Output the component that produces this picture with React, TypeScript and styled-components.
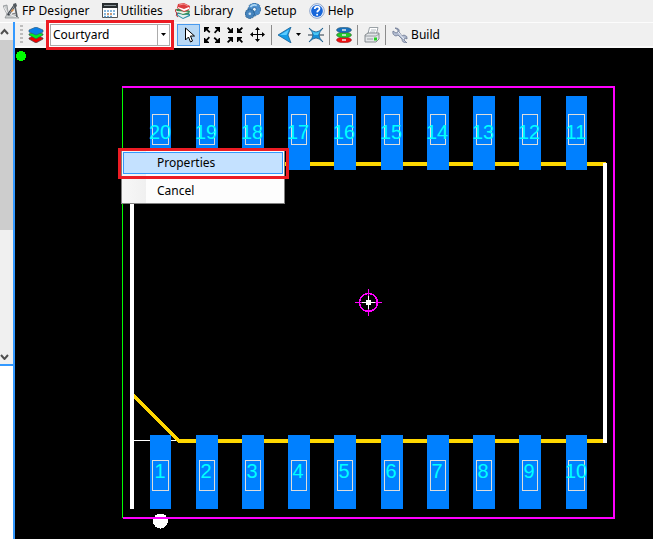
import React from "react";
import styled, { createGlobalStyle } from "styled-components";

const Global = createGlobalStyle`
  *, *::before, *::after { box-sizing: border-box; }
  html, body, #root { height: 100%; }
  body {
    margin: 0;
    overflow: hidden;
    background: #f0f0f0;
    color: #000;
    font: 12px/16px "Noto Sans", "Open Sans", sans-serif;
  }
  button, select { font: inherit; color: inherit; }
  svg { flex: none; }
`;

const Window = styled.div`
  display: flex;
  flex-direction: column;
  height: 100vh;
`;

const MenuBar = styled.nav`
  display: flex;
  flex: none;
  height: 22px;
  padding-left: 3px;
  gap: 12px;
`;

const MenuItem = styled.button`
  display: flex;
  align-items: center;
  gap: 3px;
  padding: 0;
  border: 0;
  background: none;
  white-space: nowrap;
`;

const Body = styled.div`
  display: flex;
  flex: 1;
  min-height: 0;
`;

const SidePane = styled.aside`
  display: flex;
  flex-direction: column;
  flex: none;
  width: 15px;
  border-right: 2px solid #3399ff;
  background: #fff;
`;

const ScrollBar = styled.div`
  display: flex;
  flex-direction: column;
  height: 343px;
  margin-top: 1px;
  border-bottom: 2px solid #3399ff;
  background: #f0f0f0;
`;

const ScrollButton = styled.button`
  display: flex;
  align-items: center;
  flex: none;
  height: 17px;
  padding: 0;
  border: 0;
  background: #f0f0f0;
`;

const ScrollThumb = styled.div`
  height: 190px;
  background: #cdcdcd;
`;

const ScrollSpace = styled.div`
  flex: 1;
`;

const Main = styled.main`
  display: flex;
  flex-direction: column;
  flex: 1;
  min-width: 0;
`;

const ToolBar = styled.div`
  display: flex;
  align-items: center;
  flex: none;
  height: 26px;
  padding: 0 5px;
  border-top: 1px solid #fcfcfc;
  border-bottom: 2px solid #fafafa;
  background: #f0f0f0;
`;

const Grip = styled.div`
  width: 3px;
  height: 19px;
  margin-right: 5px;
  background: repeating-linear-gradient(#bdbdbd 0 2px, transparent 2px 4px);
`;

const Highlight = styled.div`
  position: relative;
  z-index: 1;
  flex: none;
  margin: -4px 3px -4px 2px;
  border: 3px solid #ed1c24;
  background: #fff;
`;

const LayerField = styled.label`
  display: flex;
  align-items: center;
  position: relative;
  width: 122px;
  height: 24px;
  padding: 1px;
`;

const LayerSelect = styled.select`
  appearance: none;
  width: 100%;
  height: 100%;
  padding: 0 16px 0 2px;
  border: 1px solid #acacac;
  border-radius: 0;
  background: #fff;
`;

const SelectArrow = styled.span`
  display: grid;
  place-items: center;
  position: absolute;
  top: 2px;
  right: 2px;
  bottom: 2px;
  width: 12px;
  border-left: 1px solid #acacac;
  background: #fff;
  pointer-events: none;
`;

const ToolButton = styled.button<{ $active?: boolean; $width?: number }>`
  display: flex;
  align-items: center;
  justify-content: center;
  flex: none;
  gap: 3px;
  width: ${(p) => (p.$width ? `${p.$width}px` : "23px")};
  height: 22px;
  padding: 0;
  border: 1px solid ${(p) => (p.$active ? "#4a9bef" : "transparent")};
  background: ${(p) => (p.$active ? "#b8d8f5" : "none")};
`;

const Separator = styled.div`
  flex: none;
  width: 1px;
  height: 20px;
  margin: 0 2px;
  background: #8c8c8c;
`;

const Stage = styled.section`
  position: relative;
  flex: 1;
  overflow: hidden;
  background: #000;
`;

const Drawing = styled.svg`
  display: block;
  font: 20px "Liberation Sans", Arial, sans-serif;
`;

const ContextMenu = styled.div`
  position: absolute;
  left: 106px;
  top: 102px;
  width: 164px;
  padding: 1px;
  border: 1px solid #808080;
  background: linear-gradient(90deg, #f7f7f7, #f0f0f0 24px, #fdfdfd 24px);
`;

const ContextItem = styled.button<{ $active?: boolean }>`
  display: block;
  width: 100%;
  height: 22px;
  padding: 0 0 0 33px;
  border: 1px solid ${(p) => (p.$active ? "#3399ff" : "transparent")};
  background: ${(p) => (p.$active ? "#c4e1ff" : "none")};
  text-align: left;

  & + & { margin-top: 6px; }
`;

const ContextHighlight = styled.div`
  position: absolute;
  left: 103px;
  top: 100px;
  width: 171px;
  height: 31px;
  border: 3px solid #ed1c24;
  pointer-events: none;
`;

const Icon = ({ children }: { children: React.ReactNode }) => (
  <svg width="16" height="16" viewBox="0 0 16 16" aria-hidden="true">{children}</svg>
);

const DesignerIcon = () => (
  <Icon>
    <path d="M0 3l4-1 1 7-1 3h8l4 3H2l2-4z" fill="#c9cccd" stroke="#83878a" strokeWidth=".7" />
    <path d="M1 4l4 7 9 3" fill="none" stroke="#f4f4f4" strokeWidth=".9" />
    <path d="M12 2L5 12" stroke="#3e454c" strokeWidth="2.4" />
    <path d="M12 2L6 11" stroke="#c7cdd2" strokeWidth=".7" />
    <path d="M12 3l2 11" stroke="#565c61" strokeWidth="1.6" />
    <path d="M10 1l3-1 1 3-2 2z" fill="#50575d" />
    <path d="M8 8l2-2 1 1-2 2z" fill="#e08a3c" />
    <path d="M9 11l4-1" stroke="#777" />
  </Icon>
);

const UtilitiesIcon = () => (
  <Icon>
    <path d="M.5 1.5h15v13H.5z" fill="#fff" stroke="#555" />
    <path d="M0 0h16v5H0z" fill="#292e31" />
    <path d="M2 2h12v1H2z" fill="#8b9498" />
    <path d="M2 8h12M2 11h12M2 13.5h9" stroke="#5f9fd0" strokeWidth="1.6" strokeDasharray="2 1" />
    <path d="M5 11h5" stroke="#e09158" strokeWidth="1.6" strokeDasharray="2 1" />
  </Icon>
);

const LibraryIcon = () => (
  <Icon>
    <path d="M1 10l8-2 6 3v2l-7 3-7-4z" fill="#2c91a8" />
    <path d="M3 11l11 1-6 3-5-3z" fill="#e4efed" />
    <path d="M1 6l7-1 7 3-1 3-6 1-6-3z" fill="#338c55" />
    <path d="M2 8l12 1-6 2-6-2z" fill="#f3f3e9" />
    <path d="M3 1l6-1 6 3-1 4-5 2-7-4z" fill="#db3b3e" />
    <path d="M3 4l6 2 5-2v2L9 8 3 5z" fill="#fff" />
    <path d="M4 2l5-1 4 2" stroke="#f48c89" fill="none" />
    <path d="M1 6q-2 3 1 4M2 10q-2 3 1 4" stroke="#c83338" fill="none" />
  </Icon>
);

const gearPath = "M6 0h4l.5 2 2-.8 2.3 2.3-1 2 2.2.5v4l-2.2.5 1 2-2.3 2.3-2-1L10 16H6l-.5-2.2-2 1-2.3-2.3 1-2L0 10V6l2.2-.5-1-2 2.3-2.3 2 .8z";
const SetupIcon = () => (
  <Icon>
    <g transform="translate(3 0) scale(.8)">
      <path d={gearPath} fill="#4d8fce" stroke="#28679e" strokeWidth=".8" />
      <path d="M3 5q3-4 8-2" stroke="#aad6f4" strokeWidth="2" fill="none" />
      <circle cx="8" cy="8" r="2.4" fill="#e9f4fb" stroke="#28679e" />
    </g>
    <g transform="translate(0 6) scale(.6)">
      <path d={gearPath} fill="#4584be" stroke="#245987" />
      <circle cx="8" cy="8" r="2.2" fill="#c8e0f2" />
    </g>
  </Icon>
);

const HelpIcon = () => (
  <Icon>
    <circle cx="8" cy="8" r="7.3" fill="#f2f6fd" stroke="#8ba4cc" />
    <circle cx="8" cy="8" r="5.9" fill="#1766da" />
    <path d="M5.7 6q.2-2.3 2.5-2.3t2.3 2q0 1-1.1 1.8T8.1 9.4" fill="none" stroke="#fff" strokeWidth="1.7" />
    <circle cx="8.1" cy="11.7" r="1" fill="#fff" />
  </Icon>
);

const LayersIcon = () => (
  <Icon>
    <path d="M1 11l7-3 7 3v1l-7 4-7-4z" fill="#f00000" stroke="#424b4c" strokeWidth=".7" />
    <path d="M1 7l7-3 7 3v1l-7 4-7-4z" fill="#00ed22" stroke="#424b4c" strokeWidth=".7" />
    <path d="M1 3l7-3 7 3v2L8 8 1 5z" fill="#087fe9" stroke="#315f7e" strokeWidth=".7" />
  </Icon>
);

const PointerIcon = () => (
  <Icon>
    <path d="M4.5 1v12l3-3 2 5 2-1-2-5h4z" fill="#fff" stroke="#000" />
  </Icon>
);

const ExpandIcon = () => (
  <Icon>
    {[0, 90, 180, 270].map((a) => (
      <path key={a} d="M0 0h5v1L3.6 2 6.4 4.8 5.2 6 2.2 3.2 1 5H0z" transform={`rotate(${a} 8 8)`} />
    ))}
  </Icon>
);

const ContractIcon = () => (
  <Icon>
    {[0, 90, 180, 270].map((a) => (
      <path key={a} d="M6 6H1V5l1.6-1L0 1.2 1.2 0 4 2.8 5 1h1z" transform={`rotate(${a} 8 8)`} />
    ))}
  </Icon>
);

const MoveIcon = () => (
  <Icon>
    <path d="M7.5 1v13M1 7.5h13" stroke="#000" shapeRendering="crispEdges" />
    <path d="M7.5 0L10 3H5zM7.5 15l2.5-3H5zM0 7.5L3 5v5zM15 7.5L12 5v5z" />
  </Icon>
);

const BackIcon = () => (
  <Icon>
    <path d="M1 8L14 0l-3 8 3 8z" fill="#149ce8" stroke="#1b5f94" strokeWidth=".8" />
    <path d="M3 8l9-5.5L9.5 8z" fill="#5dccff" />
  </Icon>
);

const CrossIcon = () => (
  <Icon>
    <path d="M0 8h16" stroke="#4b5a66" strokeWidth="1.2" />
    <path d="M1 1q4 4 7 4t7-4q-4 4-4 7t4 7q-4-4-7-4t-7 4q4-4 4-7t-4-7z" fill="#168fd8" stroke="#15598a" strokeWidth=".8" />
    <path d="M4 4q4 3 8 0l-2 4H6z" fill="#4cc6f4" />
  </Icon>
);

const ViasIcon = () => (
  <Icon>
    <path d="M6 3h4v10H6z" fill="#626b65" />
    <ellipse cx="8" cy="13" rx="7.5" ry="2.8" fill="#f01010" stroke="#8c2222" strokeWidth=".6" />
    <ellipse cx="8" cy="8" rx="7.5" ry="2.8" fill="#20cc28" stroke="#3e593b" strokeWidth=".6" />
    <ellipse cx="8" cy="3" rx="7.5" ry="2.8" fill="#1671bc" stroke="#31566d" strokeWidth=".6" />
    <path d="M6 3h4M6 8h4M6 13h4" stroke="#e8e8e8" strokeWidth="1.4" />
  </Icon>
);

const PrinterIcon = () => (
  <Icon>
    <path d="M5.5.5H14l-2 8H3.5z" fill="#fff" stroke="#9aa1a6" />
    <path d="M7 3h5M6 5h5" stroke="#b4bdc4" />
    <path d="M1 8l3-2h11v6l-3 3H1z" fill="#e2e5e8" stroke="#70767b" strokeWidth=".8" />
    <path d="M1 9h11l3-2M3 12h6" stroke="#858c91" fill="none" strokeWidth=".8" />
    <path d="M10 10.5h3v3h-3z" fill="#24cf25" />
  </Icon>
);

const WrenchIcon = () => (
  <Icon>
    <path d="M3 1l3 2v2L4 6 1 4q-1 4 3 5l2-1 4 4q0 4 5 4l-3-3 1-2 2 1q1-3-3-4l-2 1-3-4Q8 1 3 1z" fill="#b4bed2" stroke="#6b7690" strokeWidth=".8" />
    <path d="M6 5l6 7" stroke="#edf2fc" />
  </Icon>
);

const DownArrow = () => (
  <svg width="5" height="3" viewBox="0 0 5 3" aria-hidden="true"><path d="M0 0h5L2.5 3z" /></svg>
);

const Chevron = ({ up }: { up?: boolean }) => (
  <svg width="10" height="8" viewBox="0 0 10 8" aria-hidden="true">
    <path d={up ? "M1 6l3.5-4L8 6" : "M1 3l3.5 4L8 3"} fill="none" stroke="#505050" strokeWidth="2" />
  </svg>
);

const menus = [
  { label: "FP Designer", icon: <DesignerIcon /> },
  { label: "Utilities", icon: <UtilitiesIcon /> },
  { label: "Library", icon: <LibraryIcon /> },
  { label: "Setup", icon: <SetupIcon /> },
  { label: "Help", icon: <HelpIcon /> },
];

const padColumns = [150, 196, 242, 288, 334, 381, 427, 473, 519, 566];

const Pad = ({ x, y, pin }: { x: number; y: number; pin: number }) => {
  const frameY = y + (pin > 10 ? 18 : 25);
  const outer = pin % 10 < 2;
  return (
    <g>
      <rect x={x} y={y} width={outer ? 21 : 22} height="74" fill="#0080ff" />
      <rect
        x={x + (outer ? 2 : 3)}
        y={frameY}
        width={outer ? 16 : 15}
        height="30"
        transform="translate(.5 .5)"
        fill="none"
        stroke="#dcdcdc"
      />
      <text x={x + 10} y={y + 43} textAnchor="middle" fill="#00ffff">{pin}</text>
    </g>
  );
};

const Footprint = () => (
  <Drawing width="638" height="491" viewBox="15 48 638 491" shapeRendering="crispEdges" role="img" aria-label="Footprint with 20 pads">
    <circle cx="21" cy="56" r="5" fill="#00ff00" />
    <circle cx="160.5" cy="521" r="7.5" fill="#fff" />
    <path d="M122.5 87v431" stroke="#00ff00" />
    <path d="M122 87h492v431H123" fill="none" stroke="#ff00ff" strokeWidth="2" />
    <path d="M134 440.5h46" stroke="#fff" />
    <path d="M132 164h474M132 394l47 47h425" fill="none" stroke="#ffd700" strokeWidth="4" />
    <path d="M132 163v346M605 163v280" stroke="#fff" strokeWidth="4" />
    {padColumns.map((x, i) => <Pad key={`t${x}`} x={x} y={96} pin={20 - i} />)}
    {padColumns.map((x, i) => <Pad key={`b${x}`} x={x} y={435} pin={i + 1} />)}
    <circle cx="368.5" cy="302.5" r="9" fill="none" stroke="#ff00ff" strokeWidth="1.6" />
    <path d="M355 302.5h27M368.5 289v27" stroke="#ff00ff" />
    <path d="M362 302.5h13M368.5 296v13" stroke="#fff" />
    <rect x="366" y="300" width="5" height="5" fill="#fff" />
  </Drawing>
);

export default function App() {
  return (
    <Window>
      <Global />
      <MenuBar>
        {menus.map((m) => <MenuItem key={m.label}>{m.icon}{m.label}</MenuItem>)}
      </MenuBar>
      <Body>
        <SidePane>
          <ScrollBar>
            <ScrollButton aria-label="Scroll up"><Chevron up /></ScrollButton>
            <ScrollThumb />
            <ScrollSpace />
            <ScrollButton aria-label="Scroll down"><Chevron /></ScrollButton>
          </ScrollBar>
        </SidePane>
        <Main>
          <ToolBar>
            <Grip />
            <LayersIcon />
            <Highlight>
              <LayerField>
                <LayerSelect aria-label="Layer" defaultValue="Courtyard">
                  <option>Courtyard</option>
                </LayerSelect>
                <SelectArrow><DownArrow /></SelectArrow>
              </LayerField>
            </Highlight>
            <ToolButton $active aria-label="Select"><PointerIcon /></ToolButton>
            <ToolButton aria-label="Zoom to fit"><ExpandIcon /></ToolButton>
            <ToolButton aria-label="Zoom out"><ContractIcon /></ToolButton>
            <ToolButton aria-label="Pan"><MoveIcon /></ToolButton>
            <Separator />
            <ToolButton $width={30} aria-label="Previous"><BackIcon /><DownArrow /></ToolButton>
            <ToolButton aria-label="Clear"><CrossIcon /></ToolButton>
            <Separator />
            <ToolButton aria-label="Pad stack"><ViasIcon /></ToolButton>
            <Separator />
            <ToolButton aria-label="Print"><PrinterIcon /></ToolButton>
            <Separator />
            <ToolButton $width={56}><WrenchIcon />Build</ToolButton>
          </ToolBar>
          <Stage>
            <Footprint />
            <ContextMenu role="menu">
              <ContextItem role="menuitem" $active>Properties</ContextItem>
              <ContextItem role="menuitem">Cancel</ContextItem>
            </ContextMenu>
            <ContextHighlight />
          </Stage>
        </Main>
      </Body>
    </Window>
  );
}
